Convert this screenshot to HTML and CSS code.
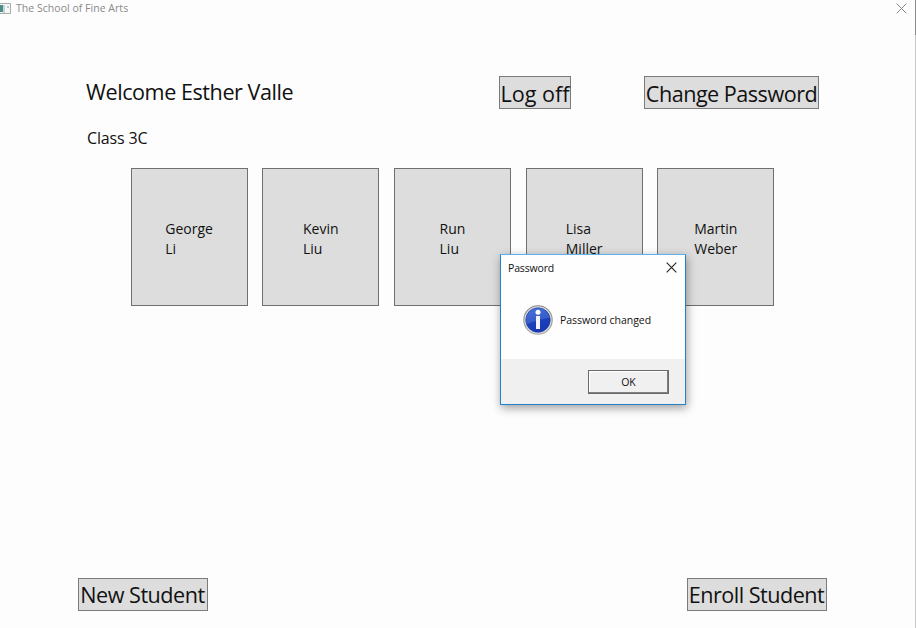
FILE: index.html
```html
<!DOCTYPE html>
<html lang="en">
<head>
<meta charset="utf-8">
<title>The School of Fine Arts</title>
<link rel="stylesheet" href="styles.css">
</head>
<body>
<div class="window">
  <header class="titlebar">
    <svg class="app-icon" width="11" height="13" viewBox="0 0 11 13"><path d="M0 1.5h10.5v10H0" fill="#f6f7f7" stroke="#a9abab"/><path d="M0 3h3v7H0z" fill="#4a8f86"/><path d="M3 3h2v8H3z" fill="#c9d4d2"/><path d="M7 4h2v2H7z" fill="#b9ccd0"/></svg>
    <span class="app-title">The School of Fine Arts</span>
    <svg class="close" width="11" height="11" viewBox="0 0 11 11"><path d="M.7.7l9.6 9.6M10.3.7L.7 10.3" stroke="#858585"/></svg>
  </header>
  <main class="page">
    <div class="top">
      <h1 class="welcome">Welcome Esther Valle</h1>
      <button class="btn logoff"><span>Log off</span></button>
      <button class="btn change"><span>Change Password</span></button>
    </div>
    <h2 class="class-name">Class 3C</h2>
    <div class="cards">
      <button class="card"><span>George<br>Li</span></button>
      <button class="card"><span>Kevin<br>Liu</span></button>
      <button class="card"><span>Run<br>Liu</span></button>
      <button class="card"><span>Lisa<br>Miller</span></button>
      <button class="card"><span>Martin<br>Weber</span></button>
    </div>
    <div class="bottom">
      <button class="btn new"><span>New Student</span></button>
      <button class="btn enroll"><span>Enroll Student</span></button>
    </div>
  </main>
  <div class="edge"></div>
  <section class="dialog" role="dialog">
    <div class="dialog-title">
      <span>Password</span>
      <svg width="11" height="11" viewBox="0 0 11 11"><path d="M.7.7l9.6 9.6M10.3.7L.7 10.3" stroke="#222" stroke-width="1.1"/></svg>
    </div>
    <div class="dialog-body">
      <svg width="30" height="30" viewBox="0 0 30 30">
        <defs>
          <linearGradient id="blue" x1="0" y1="0" x2=".4" y2="1"><stop offset="0" stop-color="#3d68d8"/><stop offset=".5" stop-color="#1f45bd"/><stop offset="1" stop-color="#1838b4"/></linearGradient>
          <linearGradient id="rim" x1="0" y1="0" x2="0" y2="1"><stop offset="0" stop-color="#858585"/><stop offset="1" stop-color="#a8a8a8"/></linearGradient>
        </defs>
        <circle cx="15" cy="15" r="14.2" fill="#dedede" stroke="url(#rim)" stroke-width="1.1"/>
        <circle cx="15" cy="15" r="12.3" fill="url(#blue)" stroke="#27459c" stroke-width=".6"/>
        <path d="M3.2 15a11.8 11.8 0 0 1 23.4-2C19 13 10 17 4 19z" fill="#6d95ee" opacity=".35"/>
        <circle cx="15" cy="7.3" r="2.5" fill="#fff"/>
        <path d="M13 11h4v13h-4z" fill="#f4f4fa"/>
      </svg>
      <span class="message">Password changed</span>
    </div>
    <div class="dialog-actions"><button class="ok">OK</button></div>
  </section>
</div>
</body>
</html>
```
FILE: styles.css
```css
* { box-sizing: border-box; }
body {
  margin: 0;
  font-family: "Open Sans", "Noto Sans", sans-serif;
  color: #111;
  background: #fdfdfd;
}
button { font: inherit; color: inherit; margin: 0; padding: 0; border-radius: 0; }
.window {
  position: relative;
  width: 916px;
  height: 628px;
  overflow: hidden;
  background: #fdfdfd;
}
.titlebar {
  display: flex;
  align-items: center;
  height: 16px;
  padding-right: 9px;
}
.app-icon { margin-right: 5px; }
.app-title {
  flex: 1;
  font-size: 10.5px;
  letter-spacing: 0.03px;
  line-height: 16px;
  color: #8a8a8a;
}
.page { padding: 0 89px 0 78px; }
.top {
  display: flex;
  align-items: flex-start;
  padding: 60px 8px 0;
  white-space: nowrap;
}
.welcome {
  width: 413px;
  margin: 0;
  font-size: 21.6px;
  font-weight: 400;
  line-height: 32px;
  letter-spacing: -0.45px;
}
.btn {
  display: flex;
  align-items: center;
  justify-content: center;
  height: 33px;
  border: 1px solid #7b7b7b;
  background: #ddd;
  font-size: 21.6px;
  line-height: 31px;
  letter-spacing: -0.5px;
  white-space: nowrap;
}
.logoff { width: 72px; letter-spacing: 0; }
.change { width: 175px; margin-left: 73px; }
.logoff, .change { padding-top: 2px; }
.class-name {
  margin: 17px 0 0 9px;
  font-size: 16px;
  font-weight: 400;
  line-height: 24px;
  letter-spacing: -0.15px;
}
.cards {
  display: grid;
  grid-template-columns: repeat(5, 117px);
  column-gap: 14.7px;
  margin: 18px 0 0 52.6px;
}
.card {
  display: flex;
  align-items: center;
  justify-content: center;
  height: 138px;
  border: 1px solid #707070;
  background: #ddd;
  font-size: 14px;
  line-height: 20px;
  text-align: left;
  padding-top: 4px;
}
.bottom {
  display: flex;
  justify-content: space-between;
  margin-top: 272px;
}
.btn.new, .btn.enroll { padding-right: 1px; }
.new { width: 130px; }
.enroll { width: 140px; }
.edge {
  position: absolute;
  top: 0;
  right: 0;
  width: 1px;
  height: 628px;
  background: linear-gradient(#8c8c8c 35px, #c6c6c6 35px);
}
.dialog {
  position: absolute;
  left: 500px;
  top: 254px;
  width: 186px;
  height: 151px;
  display: flex;
  flex-direction: column;
  border: 1px solid #2281c8;
  border-top-color: #5eb0ee;
  background: #fefefe;
  box-shadow: 1px 3px 9px rgba(0, 0, 0, .38);
  font-size: 10.5px;
}
.dialog-title {
  display: flex;
  align-items: center;
  justify-content: space-between;
  height: 25px;
  padding: 0 8px 0 7px;
  letter-spacing: -0.15px;
}
.dialog-body {
  display: flex;
  align-items: center;
  height: 79px;
  padding: 1px 0 0 22px;
}
.message { margin-left: 7px; letter-spacing: -0.05px; }
.dialog-actions {
  flex: 1;
  padding: 11px 16px 0 0;
  background: #f0f0f0;
  display: flex;
  justify-content: flex-end;
}
.ok {
  width: 81px;
  height: 24px;
  border: 1px solid #6a6a6a;
  background: #f0f0f0;
  box-shadow: inset -1px -1px #7f7f7f, inset 1px 1px #fff;
}
```
